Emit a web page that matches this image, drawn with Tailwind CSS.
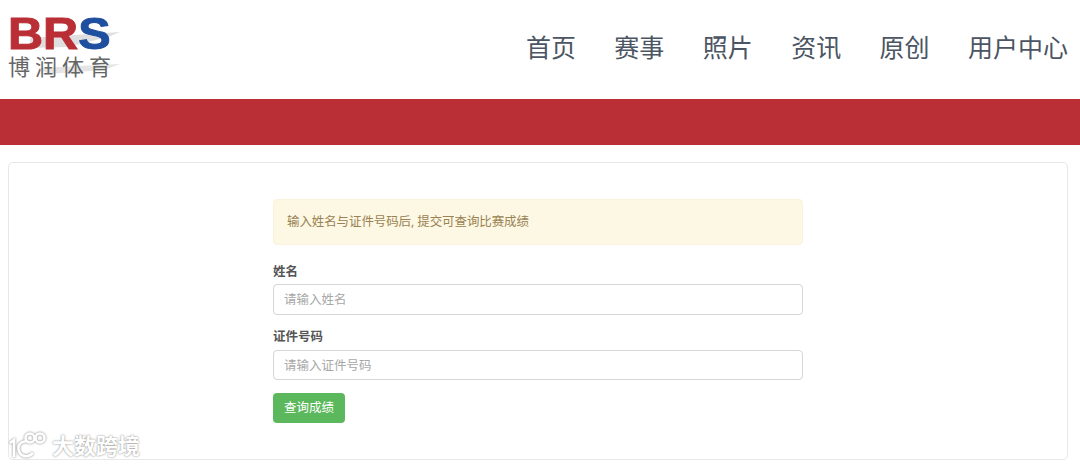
<!DOCTYPE html>
<html lang="zh"><head><meta charset="utf-8">
<script src="https://cdn.jsdelivr.net/npm/@tailwindcss/browser@4"></script>
</head>
<body class="relative h-[465px] w-[1080px] overflow-hidden bg-white font-['Open_Sans','Noto_Sans_CJK_SC',sans-serif]">
<header class="flex h-[99px] items-start justify-between pr-[12px]">
  <div class="relative ml-[8px] h-[80px] w-[115px]">
    <svg class="absolute left-0 top-[20px]" width="115" height="60" viewBox="0 0 115 60" fill="none">
      <path d="M22 18 L112 12 L100 17 L60 27 L22 28Z" fill="#d4d4d4" opacity=".75"/>
      <path d="M30 48 L112 44 L96 50 L40 54Z" fill="#dcdcdc" opacity=".75"/>
    </svg>
    <div class="absolute left-0 top-[16px] origin-left scale-x-[1.08] whitespace-nowrap font-['Liberation_Sans'] text-[45px] font-bold leading-[36px] text-[#b92f35] [-webkit-text-stroke:1px_#b92f35]">BR<span class="text-[#1f4f9f] [-webkit-text-stroke:1px_#1f4f9f]">S</span></div>
    <div class="absolute left-0 top-[54px] whitespace-nowrap text-[22px] leading-[24px] tracking-[5px] text-[#666]">博润体育</div>
  </div>
  <nav class="mt-[30px] flex gap-[38.4px] text-[25px] leading-[34px] text-[#4b5563]">
    <a>首页</a><a>赛事</a><a>照片</a><a>资讯</a><a>原创</a><a>用户中心</a>
  </nav>
</header>
<div class="h-[46px] bg-[#b92f35]"></div>
<main class="ml-[8px] mt-[17px] h-[298px] w-[1060px] rounded-[5px] border border-[#e8e8e8] bg-white pt-[36px]">
  <div class="ml-[264px] w-[530px] text-[12.5px] text-[#555]">
    <div class="flex h-[46px] items-center rounded-[4px] border border-[#faf2dc] bg-[#fcf8e3] px-[13px] tracking-[-0.1px] text-[#9a8254]">输入姓名与证件号码后, 提交可查询比赛成绩</div>
    <label class="mt-[18px] block text-[12.5px] font-bold leading-[18px]">姓名</label>
    <input class="mt-[3px] block h-[31px] w-full rounded-[4px] border border-[#d6d6d6] bg-white px-[10px] text-[12.5px] placeholder:text-[#a8a8a8]" placeholder="请输入姓名">
    <label class="mt-[13px] block text-[12.5px] font-bold leading-[18px]">证件号码</label>
    <input class="mt-[4px] block h-[30px] w-full rounded-[4px] border border-[#d6d6d6] bg-white px-[10px] text-[12.5px] placeholder:text-[#a8a8a8]" placeholder="请输入证件号码">
    <button class="mt-[13px] block h-[30px] w-[72px] rounded-[4px] bg-[#5cb85c] text-center text-[12.5px] text-white">查询成绩</button>
  </div>
</main>
<div class="absolute left-[9px] top-[431px] flex items-center text-white">
  <svg width="40" height="28" viewBox="0 0 40 28" fill="none" stroke="#fff" stroke-width="2.6" class="drop-shadow-[0_0_1px_rgba(0,0,0,.5)]">
    <path d="M1 12 L5 9 V26"/><path d="M19 10 C11 10 8 15 10 20 C12 26 19 27 24 22"/>
    <circle cx="21" cy="7" r="4.5"/><circle cx="31" cy="7" r="4.5"/>
  </svg>
  <span class="ml-[3px] text-[22px] font-bold leading-[28px] [text-shadow:0_0_2px_rgba(0,0,0,.55)]">大数跨境</span>
</div>
</body></html>
